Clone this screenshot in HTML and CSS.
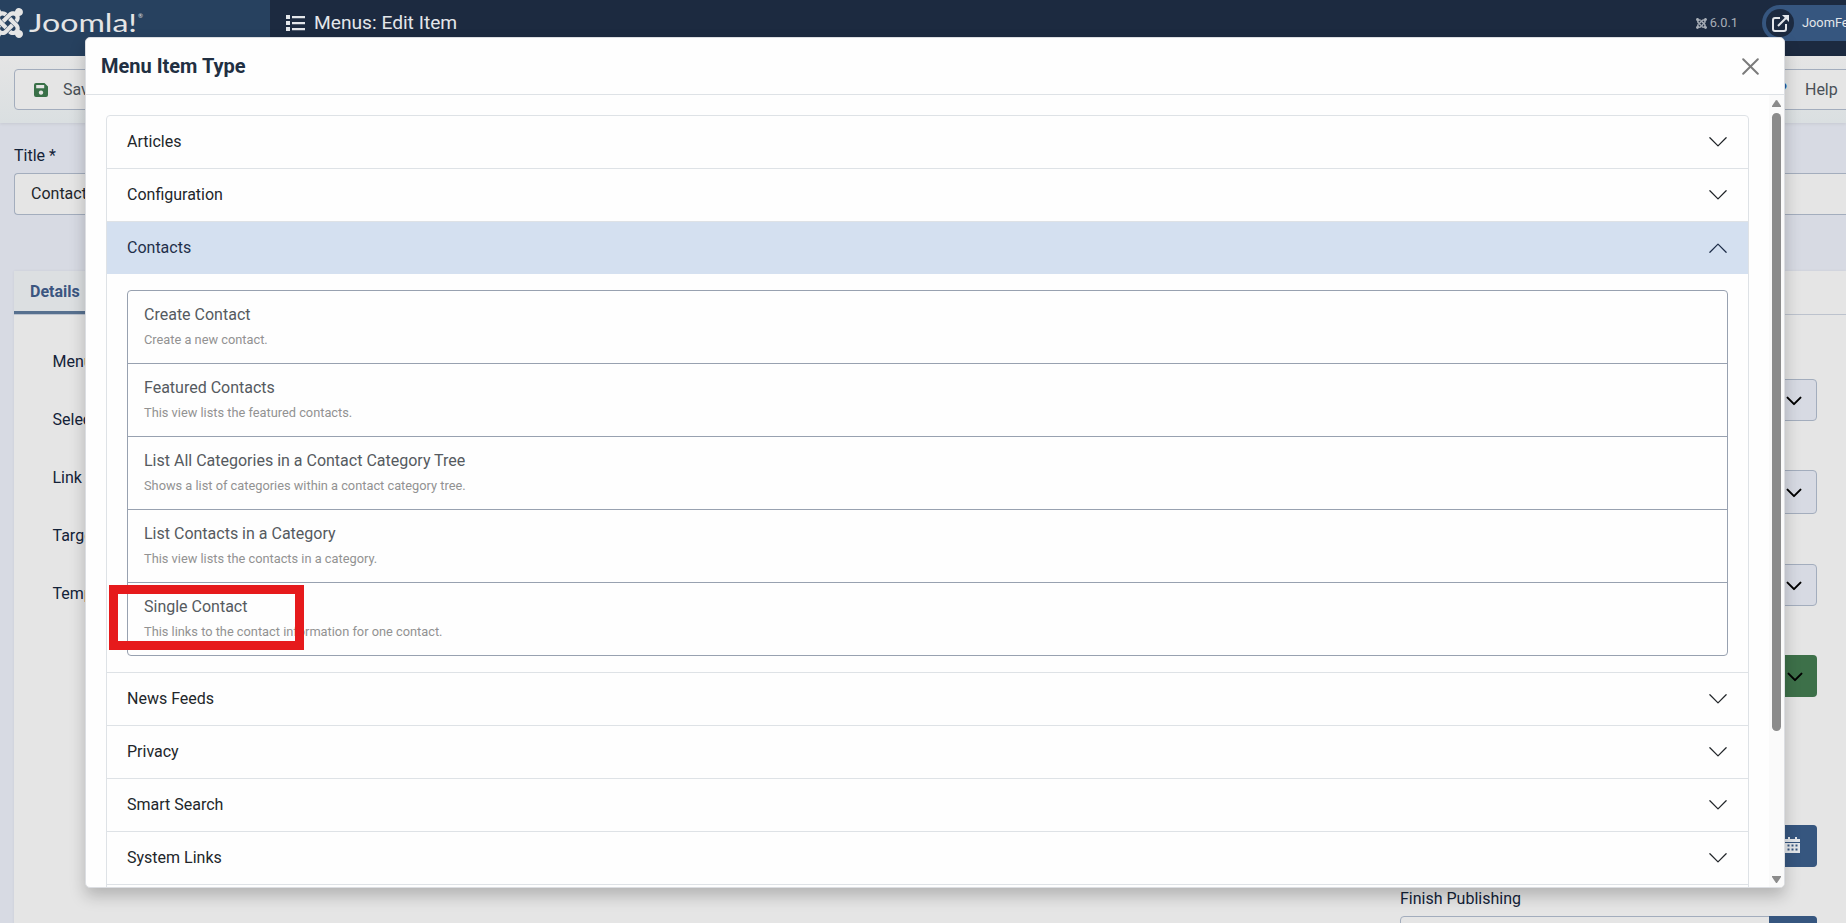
FILE: index.html
```html
<!DOCTYPE html>
<html lang="en">
<head>
    <meta charset="UTF-8">
    <meta name="viewport" content="width=device-width, initial-scale=1.0">
    <title>Menus: Edit Item</title>
    <link rel="stylesheet" href="styles.css">
</head>
<body>
    <svg class="sprite" aria-hidden="true">
        <symbol id="chevron" viewBox="0 0 16 16"><path d="M1.5 4.6 8 11.1l6.5-6.5" fill="none" stroke="currentColor" stroke-linecap="round" stroke-linejoin="round"/></symbol>
        <symbol id="joomla" viewBox="0 32 448 448">
            <path fill="currentColor" d="M.6 92.1C.6 58.8 27.4 32 60.4 32c30 0 54.5 21.9 59.2 50.2 32.6-7.6 67.1.6 96.500 30l-44.3 44.3c-20.5-20.5-42.6-16.3-55.4-3.5-14.3 14.3-14.3 37.9 0 52.2l99.5 99.5-44 44.3c-87.7-87.2-49.7-49.7-99.8-99.7-26.8-26.5-35-64.8-24.8-98.9C20.4 144.6.6 120.7.6 92.1zm129.500 116.400l44.300 44.300c10-10 89.700-89.700 99.700-99.800 14.300-14.300 37.600-14.300 51.900 0 12.800 12.800 17 35-3.500 55.400l44 44.300c31.200-31.200 38.500-67.600 28.900-101.200 29.200-4.100 51.900-29.200 51.900-59.500 0-33.200-26.800-60.100-59.800-60.100-30.300 0-55.400 22.500-59.500 51.600-33.800-9.900-71.700-1.500-98.300 25.100-18.300 19.100-71.100 71.500-99.600 99.900zm266.300 152.200c8.200-32.700-.9-68.500-26.300-93.900-11.800-12.200 5 4.700-99.500-99.700l-44.300 44.300 99.700 99.700c14.300 14.300 14.300 37.600 0 51.900-12.800 12.800-35 17-55.400-3.500l-44 44.300c27.600 30.200 68 38.800 102.700 28 5.500 27.400 29.700 48.100 58.900 48.100 33 0 59.800-26.800 59.800-60.100 0-30.200-22.500-55-51.600-59.100zm-84.300-53.100l-44-44.300c-87 86.400-50.400 50.400-99.700 99.800-14.300 14.300-37.600 14.300-51.900 0-13.100-13.400-16.900-35.300 3.200-55.400l-44-44.300c-30.200 30.200-38 65.200-29.500 98.300-26.700 6-46.200 29.900-46.200 58.200C0 453.200 26.800 480 59.800 480c28.600 0 52.500-19.800 58.600-46.700 32.700 8.200 68.500-.6 94.200-26 32.100-32 12.200-12.400 99.500-99.700z"/>
        </symbol>
    </svg>

    <header class="header">
        <div class="logo">
            <svg class="logo-mark"><use href="#joomla"/></svg>
            <svg class="logo-text" width="118" height="34"><text x="0" y="24" textLength="108" lengthAdjust="spacingAndGlyphs">Joomla!</text><text class="reg" x="109" y="10">®</text></svg>
        </div>
        <h1 class="page-title">
            <svg width="19" height="16" viewBox="0 0 19 16" fill="currentColor"><path d="M0 0h4v4H0zM0 6h4v4H0zM0 12h4v4H0zM6 1h13v2.200H6zM6 7h13v2.200H6zM6 13h13v2.200H6z"/></svg>
            Menus: Edit Item
        </h1>
        <div class="version"><svg width="11" height="11"><use href="#joomla"/></svg>6.0.1</div>
        <a class="site-link" href="#">
            <span class="site-icon"><svg width="17" height="17" viewBox="0 0 17 17" fill="none" stroke="currentColor" stroke-width="2"><path d="M8 3H3q-2 0-2 2v9q0 2 2 2h9q2 0 2-2V9M6 11l8-8"/><path d="M10 0h7v7z" fill="currentColor" stroke="none"/></svg></span>
            JoomFeed
        </a>
    </header>

    <div class="toolbar">
        <button class="btn save"><svg width="14" height="14" viewBox="0 0 14 14"><path fill="#397048" fill-rule="evenodd" d="M2 0h8.500L14 3.500V12q0 2-2 2H2q-2 0-2-2V2q0-2 2-2zM2.200 2v3.300h8V2zM7 7.400a2.200 2.200 0 1 0 .01 0z"/></svg>Save</button>
        <button class="btn help"><span class="question">?</span>Help</button>
    </div>

    <main class="page">
        <label class="title-label">Title *</label>
        <div class="title-input">Contact</div>

        <section class="panel">
            <div class="tabs"><span class="tab">Details</span></div>
            <div class="panel-body">
                <div class="labels">
                    <span>Menu Item Type</span>
                    <span>Select Contact</span>
                    <span>Link</span>
                    <span>Target Window</span>
                    <span>Template Style</span>
                </div>
                <div class="side">
                    <div class="select"><svg><use href="#chevron"/></svg></div>
                    <div class="select parent"><svg><use href="#chevron"/></svg></div>
                    <div class="select order"><svg><use href="#chevron"/></svg></div>
                    <div class="select published"><svg><use href="#chevron"/></svg></div>
                    <div class="date-field start"><button><svg width="15" height="16" viewBox="0 0 15 16" fill="#e3e6ea" fill-rule="evenodd"><path d="M3 0h2v2h5V0h2v2h3v3H0V2h3zM0 6h15v10H0zM2.500 7.500v2h2v-2zM6.500 7.500v2h2v-2zM10.500 7.500v2h2v-2zM2.500 11.500v2h2v-2zM6.500 11.500v2h2v-2zM10.500 11.500v2h2v-2z"/></svg></button></div>
                    <label class="finish-label">Finish Publishing</label>
                    <div class="date-field"><button></button></div>
                </div>
            </div>
        </section>
    </main>

    <div class="modal">
        <div class="modal-header">
            <h2>Menu Item Type</h2>
            <svg class="close" width="17" height="17" viewBox="0 0 17 17"><path d="M1.200 1.200l14.600 14.600M15.800 1.200L1.200 15.800" stroke="#7b7b7b" stroke-width="2" stroke-linecap="round"/></svg>
        </div>
        <div class="modal-body">
            <div class="accordion">
                <div class="item">Articles<svg><use href="#chevron"/></svg></div>
                <div class="item">Configuration<svg><use href="#chevron"/></svg></div>
                <div class="item open">Contacts<svg><use href="#chevron"/></svg></div>
                <div class="content">
                    <ul class="types">
                        <li><b>Create Contact</b><small>Create a new contact.</small></li>
                        <li><b>Featured Contacts</b><small>This view lists the featured contacts.</small></li>
                        <li><b>List All Categories in a Contact Category Tree</b><small>Shows a list of categories within a contact category tree.</small></li>
                        <li><b>List Contacts in a Category</b><small>This view lists the contacts in a category.</small></li>
                        <li class="single"><b>Single Contact</b><small>This links to the contact information for one contact.</small><span class="highlight"></span></li>
                    </ul>
                </div>
                <div class="item">News Feeds<svg><use href="#chevron"/></svg></div>
                <div class="item">Privacy<svg><use href="#chevron"/></svg></div>
                <div class="item">Smart Search<svg><use href="#chevron"/></svg></div>
                <div class="item">System Links<svg><use href="#chevron"/></svg></div>
            </div>
            <div class="scrollbar">
                <svg width="9" height="7" viewBox="0 0 9 7"><path d="M3.700.6q.8-1 1.600 0L9 6v1H0V6z"/></svg>
                <div class="thumb"></div>
                <svg width="9" height="7" viewBox="0 0 9 7"><path d="M3.700 6.400q.8 1 1.600 0L9 1V0H0v1z"/></svg>
            </div>
        </div>
    </div>
</body>
</html>
```
FILE: styles.css
```css
:root {
    --navy: #1c2a40;
    --blue: #36567f;
    --page: #d7dae3;
    --surface: #e5e5e5;
    --field-border: #a3adbd;
    --line: #dee2e6;
    --text: #22262a;
}

* {
    box-sizing: border-box;
}

body {
    margin: 0;
    height: 923px;
    overflow: hidden;
    background: var(--page);
    color: #132238;
    font: 16px/24px Roboto, sans-serif;
}

svg {
    flex: none;
}

.sprite {
    position: absolute;
    width: 0;
    height: 0;
}

.header {
    display: flex;
    align-items: flex-start;
    height: 56px;
    background: var(--navy);
    color: #e3e6ea;
    white-space: nowrap;
}

.logo {
    display: flex;
    width: 270px;
    height: 56px;
    padding-top: 8px;
    background: #27415f;
    color: #e5e5e5;
}

.logo-mark {
    width: 30px;
    height: 30px;
    margin-left: -7px;
    margin-right: 6px;
}

.logo-text {
    fill: currentColor;
    font: 400 25px Lato, sans-serif;
}

.logo-text .reg {
    font-size: 6px;
}

.page-title {
    display: flex;
    align-items: center;
    gap: 9px;
    margin: 0 auto 0 0;
    padding: 11px 0 0 16px;
    font-size: 19.2px;
    font-weight: 400;
}

.version {
    display: flex;
    align-items: center;
    gap: 3px;
    padding-top: 11px;
    margin-right: 24px;
    color: #a8aeb7;
    font-size: 12.8px;
}

.site-link {
    display: flex;
    align-items: center;
    gap: 8px;
    width: 84px;
    height: 36px;
    margin-top: 5px;
    padding-left: 4px;
    border-radius: 18px 0 0 18px;
    background: var(--blue);
    color: #e3e6ea;
    font-size: 12.8px;
    text-decoration: none;
    overflow: hidden;
}

.site-icon {
    display: flex;
    flex: none;
    align-items: center;
    justify-content: center;
    width: 28px;
    height: 28px;
    border-radius: 50%;
    background: var(--navy);
}

.toolbar {
    display: flex;
    justify-content: space-between;
    height: 67px;
    padding: 13px 0 0 14px;
    background: linear-gradient(#e5e5e5, #dadfe1);
    box-shadow: 0 1px 3px rgba(0, 0, 0, .08);
}

.btn {
    display: flex;
    align-items: center;
    height: 41px;
    border: 1px solid var(--field-border);
    border-radius: 4px;
    background: var(--surface);
    color: #495057;
    font: inherit;
}

.save {
    gap: 15px;
    width: 120px;
    padding: 0 0 0 19px;
}

.help {
    gap: 18px;
    width: 100px;
    padding: 0 0 0 32px;
    border-right: 0;
    border-radius: 4px 0 0 4px;
}

.question {
    color: #2a5699;
    font-weight: 700;
}

.page {
    padding: 21px 0 0 14px;
}

.title-label {
    display: block;
    height: 29px;
}

.title-input {
    height: 42px;
    padding: 8px 16px;
    border: 1px solid var(--field-border);
    border-right: 0;
    border-radius: 4px 0 0 4px;
    background: var(--surface);
    color: var(--text);
}

.panel {
    height: 660px;
    margin-top: 56px;
    background: var(--surface);
    box-shadow: 0 0 3px rgba(0, 0, 0, .06);
}

.tabs {
    height: 44px;
    border-bottom: 1px solid #bcc2cd;
}

.tab {
    display: block;
    width: 84px;
    height: 43px;
    padding: 9px 16px;
    border-bottom: 3px solid #57708f;
    background: #dcdfe1;
    color: #3b5680;
    font-weight: 700;
}

.panel-body {
    display: flex;
    justify-content: space-between;
    padding-right: 29px;
}

.labels {
    display: flex;
    flex-direction: column;
    gap: 34px;
    padding: 35px 0 0 38.5px;
}

.side {
    width: 417px;
    padding-top: 64px;
}

.select {
    display: flex;
    align-items: center;
    justify-content: flex-end;
    height: 42px;
    margin-bottom: 49px;
    padding: 1px 14px 0 0;
    border: 1px solid var(--field-border);
    border-radius: 4px;
    background: var(--page);
    color: #000;
}

.select svg {
    width: 16px;
    height: 16px;
    stroke-width: 2;
}

.parent {
    height: 44px;
    margin-bottom: 50px;
}

.order {
    height: 42px;
}

.published {
    margin-bottom: 128px;
    border: 0;
    background: #3d7049;
}

.date-field {
    display: flex;
    justify-content: flex-end;
    height: 42px;
    border: 1px solid var(--field-border);
    border-radius: 4px;
}

.date-field button {
    width: 48px;
    height: 42px;
    margin: -1px -1px 0 0;
    padding: 0 17px 2px 0;
    border: 0;
    border-radius: 0 4px 4px 0;
    background: var(--blue);
    text-align: right;
}

.date-field svg {
    vertical-align: middle;
}

.finish-label {
    display: block;
    height: 49px;
    padding-top: 20px;
}

/* modal */
.modal {
    position: absolute;
    top: 37px;
    left: 85px;
    display: flex;
    flex-direction: column;
    width: 1700px;
    height: 851px;
    border: 1px solid #dcdee2;
    border-radius: 5px;
    background: #fefefe;
    box-shadow: 0 8px 16px rgba(0, 0, 0, .22);
    overflow: hidden;
}

.modal-header {
    display: flex;
    flex: none;
    align-items: center;
    justify-content: space-between;
    height: 57px;
    padding: 0 25px 0 15px;
    border-bottom: 1px solid var(--line);
}

.modal-header h2 {
    margin: 0;
    color: #212f42;
    font-size: 20px;
    font-weight: 700;
}

.modal-body {
    display: flex;
    justify-content: space-between;
    height: 792px;
    overflow: hidden;
}

.accordion {
    width: 1643px;
    height: 900px;
    margin: 20px 0 0 20px;
    border: 1px solid var(--line);
    border-radius: 4px;
    color: var(--text);
}

.item {
    display: flex;
    align-items: center;
    justify-content: space-between;
    height: 53px;
    padding: 0 20px;
    border-bottom: 1px solid var(--line);
}

.item svg {
    width: 20px;
    height: 20px;
}

.item.open {
    height: 52px;
    border-bottom: 0;
    background: #d4e0f0;
    color: #1f2f4a;
}

.open svg {
    transform: rotate(180deg);
}

.content {
    padding: 16px 20px;
    border-bottom: 1px solid var(--line);
}

.types {
    margin: 0;
    padding: 0;
    border: 1px solid #98a1b0;
    border-radius: 4px;
    list-style: none;
}

.types li {
    height: 73px;
    padding: 12px 16px;
    border-bottom: 1px solid #98a1b0;
}

.types .single {
    position: relative;
    height: 72px;
    border-bottom: 0;
}

.types b {
    display: block;
    color: #555a60;
    font-weight: 400;
}

.types small {
    display: block;
    padding-top: 1px;
    color: #929292;
    font-size: 12.8px;
}

.highlight {
    position: absolute;
    top: 2px;
    left: -19px;
    width: 195px;
    height: 65px;
    border: 9px solid #e61a1c;
}

.scrollbar {
    display: flex;
    flex-direction: column;
    align-items: center;
    width: 15px;
    padding: 5px 0 4px;
    background: #fafafa;
    fill: #8b8b8b;
}

.thumb {
    width: 9px;
    height: 618px;
    margin: 6px 0 auto;
    border-radius: 5px;
    background: #8b8b8b;
}
```
